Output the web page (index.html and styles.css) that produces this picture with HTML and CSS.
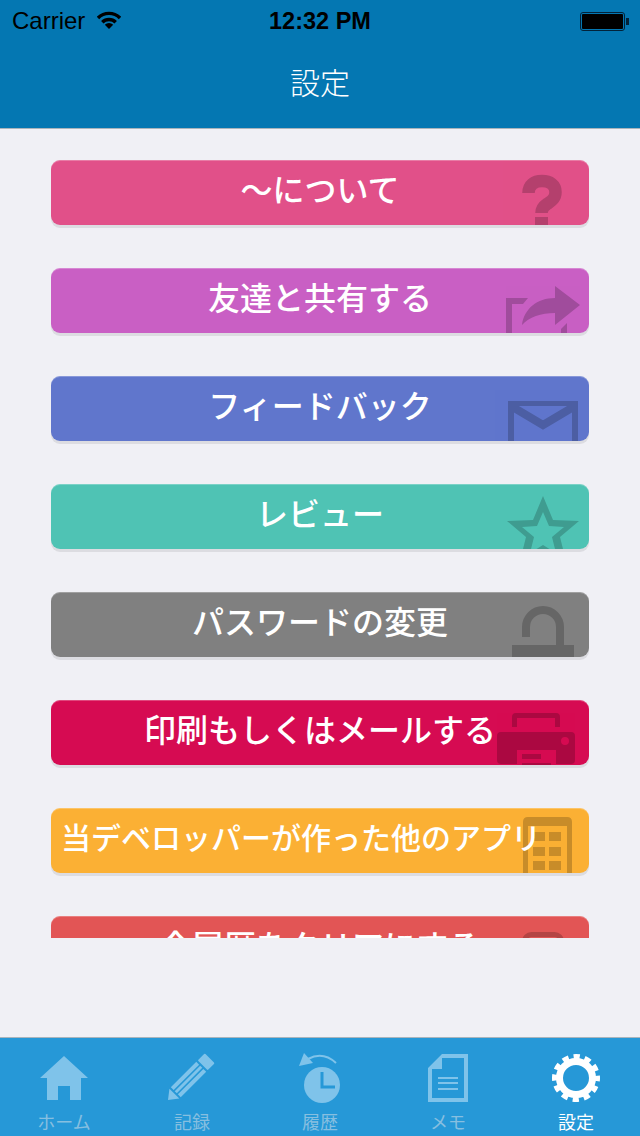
FILE: index.html
```html
<!DOCTYPE html>
<html lang="ja">
<head>
  <meta charset="UTF-8">
  <meta name="viewport" content="width=device-width, initial-scale=1.0">
  <title>設定</title>
  <link rel="stylesheet" href="styles.css">
</head>
<body>
  <header class="header">
    <div class="status">
      <div class="status-left">
        <span>Carrier</span>
        <svg class="wifi" viewBox="0 0 24 18" width="24" height="18">
          <path d="M1 7A15.5 15.5 0 0 1 23 7M5.3 11.3A9.5 9.5 0 0 1 18.7 11.3" fill="none" stroke="#000" stroke-width="3.4"/>
          <path d="M12 18L7.8 13.8A6 6 0 0 1 16.2 13.8Z"/>
        </svg>
      </div>
      <span class="time">12:32 PM</span>
      <div class="status-right"><div class="battery"><div class="battery-fill"></div></div></div>
    </div>
    <h1 class="title">設定</h1>
  </header>

  <main class="list">
    <a class="item pink">
      <svg class="item-icon" viewBox="0 0 120 65">
        <path d="M59.500 32C59.500 24 65 20 73 20C81 20 86.500 24 86.500 31C86.500 38 82 40 78 43C75 45 72.500 47 72.500 52" fill="none" stroke-width="12.500"/>
        <rect x="66" y="56" width="13" height="9"/>
      </svg>
      <span class="item-label">〜について</span>
    </a>
    <a class="item purple">
      <svg class="item-icon" viewBox="0 0 120 65">
        <path d="M37 65V29H59L54 35H43V65Z"/>
        <path d="M92 65V60L98 54V65Z"/>
        <path d="M86 17L111 36L86 56V44C72 44 60 48 53 56C55 40 68 29 86 29Z"/>
      </svg>
      <span class="item-label">友達と共有する</span>
    </a>
    <a class="item blue">
      <svg class="item-icon" viewBox="0 0 120 65">
        <path d="M39 24H109V65H103V29H45V65H39Z"/>
        <path d="M42 29L74 48L106 29" fill="none" stroke-width="8"/>
      </svg>
      <span class="item-label">フィードバック</span>
    </a>
    <a class="item teal">
      <svg class="item-icon" viewBox="0 0 120 65">
        <path fill-rule="evenodd" d="M74 11L84 35L110 36L91 52L98 80L74 70L50 80L57 52L38 36L64 35ZM74 27L68 41L53 42L65 52L61 68L74 60L87 68L83 52L95 42L80 41Z"/>
      </svg>
      <span class="item-label">レビュー</span>
    </a>
    <a class="item gray">
      <svg class="item-icon" viewBox="0 0 120 65">
        <path d="M57 44V34A17 17 0 0 1 91 34V52" fill="none" stroke-width="8"/>
        <rect x="43" y="52" width="62" height="13"/>
      </svg>
      <span class="item-label">パスワードの変更</span>
    </a>
    <a class="item crimson">
      <svg class="item-icon" viewBox="0 0 120 65">
        <path d="M43 26V16Q43 12 47 12H87Q91 12 91 16V26H86V17H48V26Z"/>
        <path fill-rule="evenodd" d="M32 31H102Q106 31 106 35V59Q106 63 102 63H87V49H48V63H32Q28 63 28 59V35Q28 31 32 31ZM92 40A4 4 0 1 0 100 40A4 4 0 1 0 92 40Z"/>
        <rect x="53" y="53" width="19" height="5"/>
        <rect x="53" y="62" width="29" height="3"/>
      </svg>
      <span class="item-label">印刷もしくはメールする</span>
    </a>
    <a class="item amber item-wide">
      <svg class="item-icon" viewBox="0 0 120 65">
        <path d="M59 8H98Q103 8 103 13V65H98V17H59V65H54V13Q54 8 59 8Z"/>
        <rect x="64" y="23" width="12" height="9"/><rect x="80" y="23" width="12" height="9"/>
        <rect x="64" y="38" width="12" height="9"/><rect x="80" y="38" width="12" height="9"/>
        <rect x="64" y="52" width="12" height="9"/><rect x="80" y="52" width="12" height="9"/>
      </svg>
      <span class="item-label item-label-small">当デベロッパーが作った他のアプリ</span>
    </a>
    <a class="item red">
      <svg class="item-icon" viewBox="0 0 120 65">
        <rect x="55.500" y="17.500" width="37" height="40" rx="7" fill="none" stroke-width="5"/>
      </svg>
      <span class="item-label">全履歴をクリアにする</span>
    </a>
  </main>

  <nav class="tabbar">
    <div class="tab">
      <svg class="tab-icon" viewBox="0 -3 64 54">
        <path d="M32 3L56 25H49V47H38V33H26V47H15V25H8Z"/>
      </svg>
      <span class="tab-label">ホーム</span>
    </div>
    <div class="tab">
      <svg class="tab-icon" viewBox="0 -3 64 54">
        <g transform="translate(8 47) rotate(-45)">
          <path d="M0 0L9 -7V7Z"/>
          <rect x="11" y="-7" width="36" height="4"/>
          <rect x="11" y="-1.500" width="36" height="3"/>
          <rect x="11" y="3" width="36" height="4"/>
          <rect x="49" y="-7" width="10" height="14" rx="1"/>
        </g>
      </svg>
      <span class="tab-label">記録</span>
    </div>
    <div class="tab">
      <svg class="tab-icon" viewBox="0 -3 64 54">
        <path d="M11 13L16 0L25 10Z"/>
        <path d="M20 6Q35 -2 48 10" fill="none" stroke-width="2"/>
        <circle cx="34" cy="32" r="18"/>
        <path d="M34 19V34H47" class="clock-hands" fill="none" stroke-width="3"/>
      </svg>
      <span class="tab-label">履歴</span>
    </div>
    <div class="tab">
      <svg class="tab-icon" viewBox="0 -3 64 54">
        <path fill-rule="evenodd" d="M26 1H52V49H12V15ZM26 5V16H16V45H48V5Z"/>
        <rect x="22" y="24" width="20" height="2"/>
        <rect x="22" y="29" width="20" height="2"/>
        <rect x="22" y="35" width="20" height="2"/>
      </svg>
      <span class="tab-label">メモ</span>
    </div>
    <div class="tab tab-active">
      <svg class="tab-icon" viewBox="0 -3 64 54">
        <circle cx="32" cy="25" r="16.500" fill="none" stroke-width="7"/>
        <circle cx="32" cy="25" r="21.500" fill="none" stroke-width="5" stroke-dasharray="6.300 4.960" stroke-dashoffset="3.150"/>
      </svg>
      <span class="tab-label">設定</span>
    </div>
  </nav>
</body>
</html>
```

FILE: styles.css
```css
* {
  box-sizing: border-box;
}

body {
  margin: 0;
  height: 1136px;
  overflow: hidden;
  display: flex;
  flex-direction: column;
  font-family: "Liberation Sans", "Noto Sans CJK JP", sans-serif;
  background-color: #f0f0f5;
}

.header {
  height: 129px;
  flex-shrink: 0;
  background-color: #0477b2;
  border-bottom: 1px solid #a9b4bc;
}

.status {
  height: 42px;
  padding: 0 12px;
  display: grid;
  grid-template-columns: 1fr auto 1fr;
  align-items: center;
  font-size: 24px;
  color: #000;
}

.status-left {
  display: flex;
  align-items: center;
  gap: 12px;
}

.wifi {
  margin-top: -2px;
}

.time {
  font-weight: bold;
  font-size: 23.500px;
}

.status-right {
  display: flex;
  justify-content: flex-end;
  margin-right: 3px;
}

.battery {
  position: relative;
  width: 45px;
  height: 19px;
  padding: 1px;
  border: 1px solid #02233a;
  border-radius: 3px;
}

.battery::after {
  content: "";
  position: absolute;
  right: -5px;
  top: 5px;
  width: 3px;
  height: 7px;
  background-color: #02233a;
}

.battery-fill {
  height: 100%;
  background-color: #000;
  border-radius: 1px;
}

.title {
  margin: 0;
  height: 84px;
  display: flex;
  align-items: center;
  justify-content: center;
  font-size: 30px;
  font-weight: 300;
  line-height: 1;
  color: #fff;
}

.list {
  height: 809px;
  flex-shrink: 0;
  overflow: hidden;
  padding: 31px 51px 0;
  display: flex;
  flex-direction: column;
  gap: 43px;
}

.item {
  position: relative;
  height: 65px;
  flex-shrink: 0;
  overflow: hidden;
  border-radius: 9px;
  display: flex;
  align-items: center;
  justify-content: center;
  box-shadow: inset 0 1px 0 rgba(255,255,255,0.25), 0 3px 0 #dcdce1;
}

.item-wide {
  justify-content: flex-start;
  padding-left: 10px;
}

.item-icon {
  position: absolute;
  top: 1px;
  right: 0;
  width: 120px;
  height: 65px;
  fill: #000;
  stroke: #000;
  stroke-width: 0;
  opacity: 0.2;
}

.item-label {
  position: relative;
  margin-top: -3px;
  font-size: 32px;
  font-weight: 500;
  line-height: 1;
  color: #fff;
  white-space: nowrap;
}

.item-label-small {
  font-size: 30px;
}

.pink { background-color: #e15089; }
.purple { background-color: #c95fc4; }
.blue { background-color: #6076cc; }
.teal { background-color: #4fc3b4; }
.gray { background-color: #808080; }
.crimson { background-color: #d60b52; }
.amber { background-color: #fbb034; }
.red { background-color: #e25555; }

.tabbar {
  flex: 1;
  display: grid;
  grid-template-columns: repeat(5, 1fr);
  margin-top: 99px;
  background-color: #2698d7;
  border-top: 1px solid #a9b4bc;
}

.tab {
  display: flex;
  flex-direction: column;
  align-items: center;
  padding-top: 12px;
  color: #86bfe0;
}

.tab-icon {
  width: 64px;
  height: 54px;
  flex-shrink: 0;
  fill: #7fc3ea;
  stroke: #7fc3ea;
  stroke-width: 0;
}

.clock-hands {
  stroke: #2698d7;
}

.tab-label {
  margin-top: 8px;
  font-size: 18px;
  line-height: 22px;
}

.tab-active {
  color: #fff;
}

.tab-active .tab-icon {
  fill: #fff;
  stroke: #fff;
}
```
